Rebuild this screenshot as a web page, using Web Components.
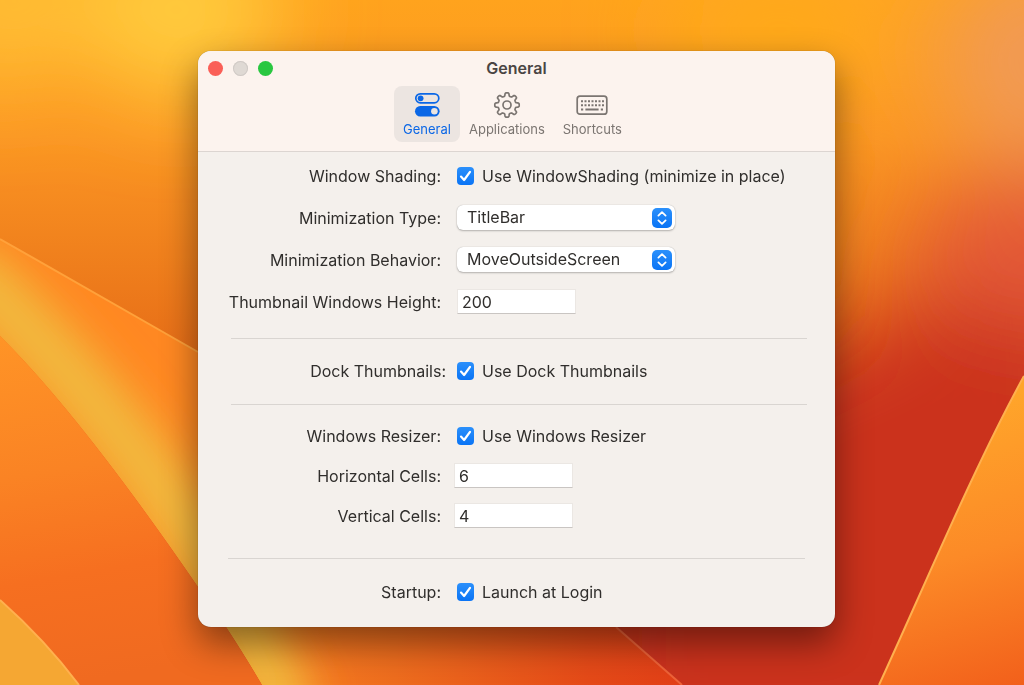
<!DOCTYPE html>
<html lang="en">
<head>
<meta charset="utf-8">
<meta name="viewport" content="width=device-width, initial-scale=1">
<title>General</title>
<style>
    body {
        margin: 0;
        min-height: 100vh;
        box-sizing: border-box;
        padding: 0 0 8px 9px;
        display: grid;
        place-items: center;
        font-family: Inter, "Liberation Sans", sans-serif;
        font-size: 16px;
        line-height: 20px;
        color: #302e2c;
        background: #f28520;
    }
    .resizer {
        --control-gap: 13px;
    }
    .dock {
        --label-width: 215px;
        --control-gap: 11px;
    }
</style>
</head>
<body>
<desk-wallpaper></desk-wallpaper>
<pref-window heading="General">
    <tool-tab slot="tabs" label="General" icon="switches" active></tool-tab>
    <tool-tab slot="tabs" label="Applications" icon="gear"></tool-tab>
    <tool-tab slot="tabs" label="Shortcuts" icon="keyboard"></tool-tab>

    <pref-section class="shading">
        <check-row label="Window Shading:" text="Use WindowShading (minimize in place)"></check-row>
        <select-row label="Minimization Type:" value="TitleBar"></select-row>
        <select-row label="Minimization Behavior:" value="MoveOutsideScreen"></select-row>
        <field-row label="Thumbnail Windows Height:" value="200"></field-row>
    </pref-section>
    <pref-section class="dock">
        <check-row label="Dock Thumbnails:" text="Use Dock Thumbnails"></check-row>
    </pref-section>
    <pref-section class="resizer">
        <check-row style="--control-gap: 16px" label="Windows Resizer:" text="Use Windows Resizer"></check-row>
        <field-row label="Horizontal Cells:" value="6"></field-row>
        <field-row label="Vertical Cells:" value="4"></field-row>
    </pref-section>
    <pref-section class="startup">
        <check-row label="Startup:" text="Launch at Login"></check-row>
    </pref-section>
</pref-window>

<script>
class DeskWallpaper extends HTMLElement {
    connectedCallback() {
        this.attachShadow({ mode: 'open' });
        this.shadowRoot.innerHTML = `
            <style>
                :host {
                    display: block;
                    position: fixed;
                    inset: 0;
                    z-index: -1;
                }
                svg {
                    display: block;
                    width: 100%;
                    height: 100%;
                }
            </style>
            <svg viewBox="0 0 1024 685" preserveAspectRatio="none" aria-hidden="true">
                <defs>
                    <filter id="soft" x="-50%" y="-50%" width="200%" height="200%"><feGaussianBlur stdDeviation="45"/></filter>
                    <filter id="fold" x="-50%" y="-50%" width="200%" height="200%"><feGaussianBlur stdDeviation="20"/></filter>
                    <linearGradient id="sky" x1="0" y1="0" x2="0" y2="1">
                        <stop offset="0" stop-color="#ffa31d"/>
                        <stop offset=".2" stop-color="#fb9623"/>
                        <stop offset=".5" stop-color="#e87018"/>
                        <stop offset="1" stop-color="#c83818"/>
                    </linearGradient>
                    <linearGradient id="left" gradientUnits="userSpaceOnUse" x1="0" y1="336" x2="60" y2="685">
                        <stop offset="0" stop-color="#ff9426"/>
                        <stop offset=".4" stop-color="#fa8324"/>
                        <stop offset=".7" stop-color="#f66f20"/>
                        <stop offset="1" stop-color="#f06a20"/>
                    </linearGradient>
                    <linearGradient id="band" gradientUnits="userSpaceOnUse" x1="200" y1="0" x2="685" y2="0">
                        <stop offset="0" stop-color="#ff8822"/>
                        <stop offset=".4" stop-color="#ee6d1e"/>
                        <stop offset=".8" stop-color="#e54a18"/>
                        <stop offset="1" stop-color="#e23f17"/>
                    </linearGradient>
                    <linearGradient id="right" gradientUnits="userSpaceOnUse" x1="960" y1="410" x2="1040" y2="680">
                        <stop offset="0" stop-color="#ffa52a"/>
                        <stop offset=".5" stop-color="#fc8a27"/>
                        <stop offset="1" stop-color="#f2601b"/>
                    </linearGradient>
                    <clipPath id="bandClip"><path d="M0 239 198 352C360 440 510 530 616 627L682 685H262Q228 627 198 587Q80 415 0 336Z"/></clipPath>
                </defs>
                <rect width="1024" height="685" fill="url(#sky)"/>
                <g filter="url(#soft)">
                    <ellipse cx="180" cy="10" rx="100" ry="90" fill="#ffcb3e"/>
                    <ellipse cx="0" cy="0" rx="80" ry="90" fill="#ffbd34"/>
                    <ellipse cx="780" cy="30" rx="120" ry="60" fill="#ffaa1e"/>
                    <ellipse cx="1040" cy="60" rx="100" ry="100" fill="#f19a55"/>
                    <ellipse cx="1040" cy="260" rx="130" ry="90" fill="#e45a38"/>
                    <path d="M760 380 930 300 1100 330V760H600V560Z" fill="#cb321d"/>
                </g>
                <path d="M0 239 198 352C360 440 510 530 616 627L682 685H262Q228 627 198 587Q80 415 0 336Z" fill="url(#band)"/>
                <g clip-path="url(#bandClip)">
                    <path d="M-40 265Q100 390 210 560L290 720" fill="none" stroke="#f2b83c" stroke-width="65" filter="url(#fold)"/>
                </g>
                <path d="M0 336Q80 415 198 587Q228 627 262 685H0Z" fill="url(#left)"/>
                <path d="M0 600Q45 640 79 685H0Z" fill="#f5a733"/>
                <path d="M1024 376C975 465 925 585 879 685H1024Z" fill="url(#right)"/>
                <g fill="none" stroke="#ffb04e" stroke-width="2">
                    <path d="M0 239 198 352" stroke="#ffa13a"/>
                    <path d="M0 600Q45 640 79 685"/>
                    <path d="M1024 376C975 465 925 585 879 685"/>
                    <path d="M616 627 682 685" stroke="#ef6338"/>
                </g>
            </svg>
        `;
    }
}
customElements.define('desk-wallpaper', DeskWallpaper);

class PrefWindow extends HTMLElement {
    connectedCallback() {
        this.attachShadow({ mode: 'open' });
        this.shadowRoot.innerHTML = `
            <style>
                :host {
                    display: block;
                    width: calc(100% - 32px);
                    max-width: 637px;
                    border-radius: 13px;
                    background: #f4f0ec;
                    box-shadow: 0 0 1px rgba(0, 0, 0, 0.5), 0 16px 36px rgba(0, 0, 0, 0.45);
                    overflow: hidden;
                }
                header {
                    background: #fcf3ee;
                    border-bottom: 1px solid #dcd5d1;
                    padding-bottom: 9px;
                }
                .title-bar {
                    display: grid;
                    grid-template-columns: 1fr auto 1fr;
                    align-items: center;
                    height: 35px;
                    padding: 0 10px;
                }
                .lights {
                    display: flex;
                    gap: 10px;
                }
                .lights button {
                    width: 15px;
                    height: 15px;
                    padding: 0;
                    border: 0;
                    border-radius: 50%;
                    background: #fa5f57;
                }
                .lights .minimize {
                    background: #dfd9d4;
                    box-shadow: inset 0 0 0 1px #d0cac6;
                }
                .lights .zoom {
                    background: #29c740;
                }
                h1 {
                    margin: 0;
                    font-size: 16px;
                    font-weight: 600;
                    line-height: 20px;
                    color: #4a4543;
                }
                nav {
                    display: flex;
                    justify-content: center;
                    padding-right: 8px;
                }
            </style>
            <header>
                <div class="title-bar">
                    <div class="lights">
                        <button type="button" class="close" aria-label="Close"></button>
                        <button type="button" class="minimize" aria-label="Minimize" disabled></button>
                        <button type="button" class="zoom" aria-label="Zoom"></button>
                    </div>
                    <h1>${this.getAttribute('heading')}</h1>
                </div>
                <nav><slot name="tabs"></slot></nav>
            </header>
            <main><slot></slot></main>
        `;
    }
}
customElements.define('pref-window', PrefWindow);

const TAB_ICONS = {
    switches: `
        <rect x="2.8" y="2.8" width="23" height="9" rx="4.5" fill="none" stroke="currentColor" stroke-width="1.7"/>
        <circle cx="7.6" cy="7.3" r="2.9" fill="currentColor"/>
        <rect x="2" y="15" width="24.6" height="10.4" rx="5.2" fill="currentColor"/>
        <circle cx="21.4" cy="20.2" r="3.3" fill="#ece5e1"/>`,
    gear: `
        <g fill="none" stroke="currentColor" stroke-width="1.7" stroke-linejoin="round">
            <path d="${gearPath(14, 14)}"/>
            <circle cx="14" cy="14" r="4"/>
        </g>`,
    keyboard: `
        <rect x="-.8" y="5.2" width="29.6" height="18" rx="2.8" fill="none" stroke="currentColor" stroke-width="1.7"/>
        <g fill="none" stroke="currentColor" stroke-width="2">
            <path d="M3 10.2H26M3 14.2H26" stroke-dasharray="2 1.5"/>
            <path d="M3 18.4H5.2M7.4 18.4H20.6M22.8 18.4H25"/>
        </g>`
};

// eight rounded teeth around the hub
function gearPath(cx, cy) {
    const points = [];
    for (let i = 0; i <= 160; i++) {
        const a = i / 160 * Math.PI * 2;
        const r = 10.6 + 1.6 * Math.tanh(2.6 * Math.cos(8 * a)) / Math.tanh(2.6);
        points.push((cx + r * Math.sin(a)).toFixed(2) + ' ' + (cy - r * Math.cos(a)).toFixed(2));
    }
    return 'M' + points.join('L') + 'Z';
}

class ToolTab extends HTMLElement {
    connectedCallback() {
        this.attachShadow({ mode: 'open' });
        this.shadowRoot.innerHTML = `
            <style>
                :host {
                    display: block;
                }
                button {
                    display: flex;
                    flex-direction: column;
                    align-items: center;
                    gap: 1px;
                    padding: 5px 9px 4px;
                    border: 0;
                    border-radius: 8px;
                    background: none;
                    color: #7b7571;
                    font: inherit;
                    font-size: 13px;
                    line-height: 18px;
                }
                :host([active]) button {
                    background: #ece5e1;
                    color: #0b67e6;
                }
                svg {
                    width: 28px;
                    height: 28px;
                    overflow: visible;
                }
            </style>
            <button type="button">
                <svg viewBox="0 0 28 28" aria-hidden="true">${TAB_ICONS[this.getAttribute('icon')]}</svg>
                <span>${this.getAttribute('label')}</span>
            </button>
        `;
    }
}
customElements.define('tool-tab', ToolTab);

class PrefSection extends HTMLElement {
    connectedCallback() {
        this.attachShadow({ mode: 'open' });
        this.shadowRoot.innerHTML = `
            <style>
                :host {
                    display: block;
                    --row-height: 42px;
                }
                .rows {
                    padding: 11px 28px 12px 33px;
                }
                hr {
                    height: 1px;
                    margin: 0 28px 0 33px;
                    border: 0;
                    background: #d9d5d1;
                }
                :host(.shading) .rows {
                    padding-top: 3px;
                    padding-bottom: 15px;
                }
                :host(.resizer) {
                    --row-height: 40px;
                }
                :host(.resizer) .rows {
                    padding-bottom: 22px;
                }
                :host(.resizer) hr {
                    margin: 0 30px;
                }
                :host(.startup) .rows {
                    padding-top: 12px;
                    padding-bottom: 14px;
                }
                :host(.startup) hr {
                    display: none;
                }
            </style>
            <div class="rows"><slot></slot></div>
            <hr>
        `;
    }
}
customElements.define('pref-section', PrefSection);

// label on the left, the subclass supplies the control and its styles
class PrefRow extends HTMLElement {
    connectedCallback() {
        this.attachShadow({ mode: 'open' });
        this.shadowRoot.innerHTML = `
            <style>
                :host {
                    display: grid;
                    grid-template-columns: var(--label-width, 210px) 1fr;
                    column-gap: var(--control-gap, 16px);
                    align-items: center;
                    height: var(--row-height);
                }
                .name {
                    text-align: right;
                    white-space: nowrap;
                    justify-self: end;
                }
                ${this.styles()}
            </style>
            <label class="name" for="control">${this.getAttribute('label')}</label>
            ${this.control()}
        `;
    }
}

class CheckRow extends PrefRow {
    styles() {
        return `
                .check {
                    display: flex;
                    align-items: center;
                    gap: 8px;
                    white-space: nowrap;
                }
                .box {
                    display: grid;
                    width: 17px;
                    height: 18px;
                }
                input, svg {
                    grid-area: 1 / 1;
                    width: 100%;
                    height: 100%;
                    margin: 0;
                }
                input {
                    appearance: none;
                    border-radius: 4px;
                    background: linear-gradient(#2b90fb, #0a74f5);
                }
                svg {
                    pointer-events: none;
                }
        `;
    }
    control() {
        return `
            <label class="check">
                <span class="box">
                    <input type="checkbox" id="control" checked>
                    <svg viewBox="0 0 17 18" aria-hidden="true">
                        <path d="M4 9.6 7.1 13 13 4.8" fill="none" stroke="#fff" stroke-width="2.2" stroke-linecap="round" stroke-linejoin="round"/>
                    </svg>
                </span>
                <span>${this.getAttribute('text')}</span>
            </label>
        `;
    }
}
customElements.define('check-row', CheckRow);

class SelectRow extends PrefRow {
    styles() {
        return `
                .popup {
                    display: grid;
                    align-items: center;
                    width: 218px;
                    height: 25px;
                }
                select, svg {
                    grid-area: 1 / 1;
                }
                select {
                    appearance: none;
                    width: 100%;
                    height: 100%;
                    padding: 0 30px 1px 10px;
                    border: 0;
                    border-radius: 6px;
                    background: #fff;
                    box-shadow: 0 0 1px rgba(0, 0, 0, 0.3), 0 1px 2px rgba(0, 0, 0, 0.25);
                    color: inherit;
                    font: inherit;
                }
                svg {
                    justify-self: end;
                    width: 20px;
                    height: 20px;
                    margin-right: 3px;
                    border-radius: 5px;
                    background: linear-gradient(#2b90fb, #0a74f5);
                    pointer-events: none;
                }
        `;
    }
    control() {
        return `
            <div class="popup">
                <select id="control"><option>${this.getAttribute('value')}</option></select>
                <svg viewBox="0 0 20 20" aria-hidden="true">
                    <path d="M6.4 7.6 10 4.2l3.6 3.4M6.4 12.4 10 15.8l3.6-3.4" fill="none" stroke="#fff" stroke-width="1.8" stroke-linecap="round" stroke-linejoin="round"/>
                </svg>
            </div>
        `;
    }
}
customElements.define('select-row', SelectRow);

class FieldRow extends PrefRow {
    styles() {
        return `
                input {
                    box-sizing: border-box;
                    width: 119px;
                    height: 25px;
                    padding: 0 4px;
                    border: 1px solid #ebe7e3;
                    border-bottom-color: #c9c5c2;
                    background: #fff;
                    color: inherit;
                    font: inherit;
                }
        `;
    }
    control() {
        return `<input type="text" id="control" value="${this.getAttribute('value')}">`;
    }
}
customElements.define('field-row', FieldRow);
</script>
</body>
</html>
